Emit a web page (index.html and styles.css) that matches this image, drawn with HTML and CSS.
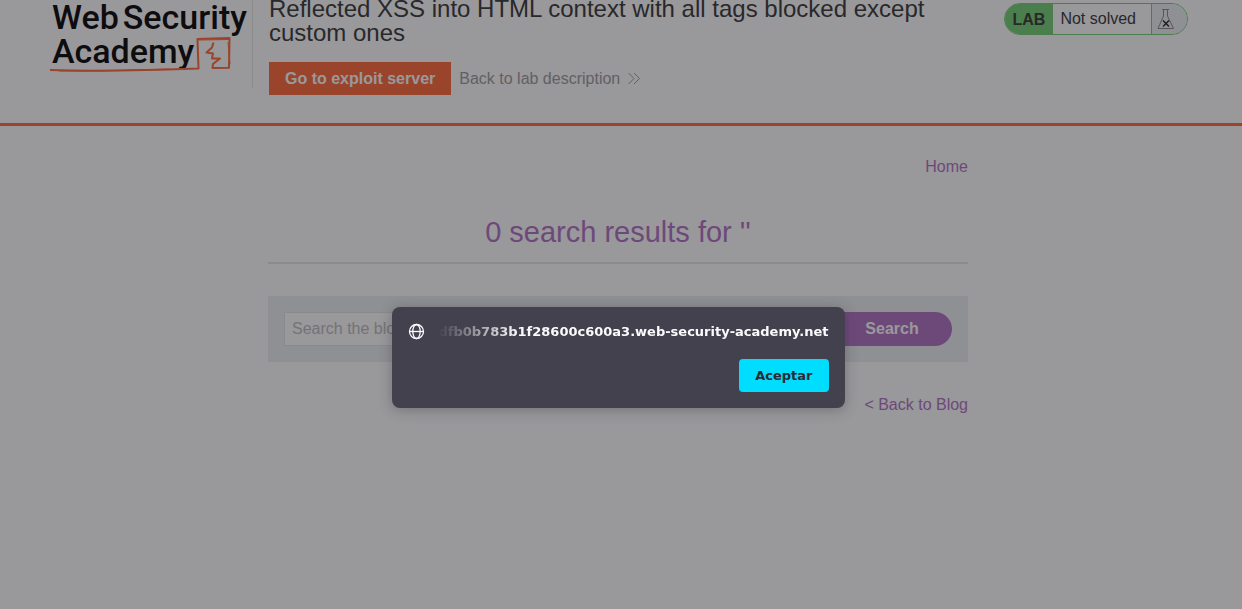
FILE: index.html
```html
<!DOCTYPE html>
<html lang="en">
<head>
<meta charset="utf-8">
<title>Reflected XSS into HTML context with all tags blocked except custom ones</title>
<link rel="stylesheet" href="styles.css">
</head>
<body>
<header class="lab-header">
  <div class="lab-header-inner">
    <a class="logo" href="#" aria-label="Web Security Academy">
      <span class="logo-line"><span>Web</span><span>Security</span></span>
      <span class="logo-line">Academy</span>
      <svg class="logo-mark" width="184" height="38" viewBox="0 0 184 38" fill="none" stroke="#ff6633" aria-hidden="true">
        <path d="M1 34Q30 35 70 34.500T149.500 32.500L148.500 3L180.500 2L180 31.700L163.500 32L164 28L171 22.500H163L164 17.500L157.500 16.500L163 11.500L164.500 6.500" stroke-width="2" stroke-linejoin="round"/>
        <path d="M10 35Q60 35 120 33M150 4L180 3.500M179 6L181 28" stroke-width="1"/>
      </svg>
    </a>
    <div class="lab-title">
      <h1>Reflected XSS into HTML context with all tags blocked except custom ones</h1>
      <div class="lab-actions">
        <a class="exploit" href="#">Go to exploit server</a>
        <a class="back-lab" href="#">Back to lab description
          <svg width="12" height="12" viewBox="0 0 12 12" fill="none" stroke="currentColor" aria-hidden="true"><path d="M.5 0L6 5.500L.5 11M6 0L11.500 5.500L6 11"/></svg>
        </a>
      </div>
    </div>
    <div class="lab-status">
      <span class="status-tag">LAB</span>
      <span class="status-text">Not solved</span>
      <span class="status-icon">
        <svg width="18" height="20" viewBox="0 0 18 20" fill="none" stroke="#88888c" aria-hidden="true">
          <path d="M5 .5H12M6.500 .5V7L1 19.500H16.500L10.500 7V.5"/>
          <path d="M6 11.500L12 17.500M12 11.500L6 17.500" stroke="#222" stroke-width="1.500"/>
        </svg>
      </span>
    </div>
  </div>
</header>
<main class="content">
  <nav class="top-links"><a href="#">Home</a></nav>
  <h2 class="results-title">0 search results for ''</h2>
  <form class="search">
    <input type="text" placeholder="Search the blog..." aria-label="Search the blog">
    <button type="button">Search</button>
  </form>
  <div class="back-blog"><a href="#">&lt; Back to Blog</a></div>
</main>
<div class="backdrop">
  <div class="alert" role="alertdialog" aria-labelledby="alert-host">
    <div class="alert-head">
      <svg width="17" height="17" viewBox="0 0 17 17" fill="none" stroke="#fbfbfe" stroke-width="1.300" aria-hidden="true">
        <circle cx="8.500" cy="8.500" r="7"/><ellipse cx="8.500" cy="8.500" rx="3.700" ry="7"/><path d="M1.500 8.500H15.500"/>
      </svg>
      <span class="host" id="alert-host">dfb0b783b1f28600c600a3.web-security-academy.net</span>
    </div>
    <button class="accept" type="button">Aceptar</button>
  </div>
</div>
</body>
</html>
```
FILE: styles.css
```css
* { box-sizing: border-box; }
body {
  margin: 0;
  overflow: hidden;
  background: #fff;
  color: #333332;
  font: 16px/20px "Liberation Sans", Arial, sans-serif;
}
a { text-decoration: none; color: #b070c4; }

.lab-header { border-bottom: 3px solid #ff6633; }
.lab-header-inner {
  display: flex;
  align-items: flex-start;
  padding: 0 54px 28px 52px;
}
.logo {
  position: relative;
  flex: none;
  width: 201px;
  height: 88px;
  border-right: 1px solid #e6e6e6;
  color: #000;
  font: 500 34px/34px Roboto, sans-serif;
  white-space: nowrap;
}
.logo-line { display: flex; gap: 4px; }
.logo-mark { position: absolute; left: -3px; top: 36px; }

.lab-title { flex: 1; margin-top: -3px; padding-left: 16px; }
.lab-title h1 {
  max-width: 680px;
  margin: 0 0 17px;
  font-size: 24px;
  line-height: 24px;
  font-weight: 400;
}
.lab-actions { display: flex; align-items: center; gap: 8px; }
.exploit {
  padding: 0 16px;
  background: #ff6633;
  color: #fff;
  font-weight: 700;
  line-height: 33px;
}
.back-lab { display: flex; align-items: center; gap: 8px; color: #9a9a9a; }

.lab-status {
  display: flex;
  flex: none;
  height: 32px;
  margin-top: 3px;
  overflow: hidden;
  border: 1px solid #6fcf70;
  border-radius: 16px;
  line-height: 30px;
}
.status-tag {
  padding: 1px 8px 0;
  background: #6fcf70;
  font-weight: 700;
}
.status-text { padding: 0 15px 0 7px; }
.status-icon {
  display: flex;
  align-items: center;
  padding: 0 12px 0 5px;
  border-left: 1px solid #6fcf70;
  background: #ecf0f1;
}

.content {
  width: 700px;
  max-width: 100%;
  margin: 0 auto;
  padding-top: 31px;
}
.content, .alert { position: relative; right: 3px; }
.top-links, .back-blog { text-align: right; }
.results-title {
  margin: 36px 0 32px;
  padding-bottom: 11px;
  border-bottom: 2px solid #e6e6e6;
  color: #b070c4;
  font-size: 29px;
  line-height: 38px;
  font-weight: 400;
  text-align: center;
}
.search {
  display: flex;
  margin-bottom: 33px;
  padding: 16px;
  background: #ecf0f1;
}
.search input {
  flex: 1;
  height: 34px;
  padding: 0 7px;
  border: 1px solid #e4e4e4;
  background: #fff;
  font: inherit;
}
.search input::placeholder { color: #bbb; opacity: 1; }
.search button {
  width: 120px;
  height: 34px;
  padding: 0;
  border: 0;
  border-radius: 0 17px 17px 0;
  background: #b070c4;
  color: #fff;
  font: inherit;
  font-weight: 700;
}

.backdrop {
  position: fixed;
  inset: 0;
  display: flex;
  align-items: flex-start;
  justify-content: center;
  padding-top: 307px;
  background: rgba(28, 27, 34, .45);
}
.alert {
  display: flex;
  flex-direction: column;
  gap: 19px;
  min-width: 453px;
  padding: 16px;
  border-radius: 8px;
  background: #42414d;
  box-shadow: 0 2px 14px rgba(28, 27, 34, .3);
  font: 700 13px/17px "DejaVu Sans", sans-serif;
}
.alert-head {
  display: flex;
  align-items: center;
  justify-content: space-between;
}
.host {
  color: #fbfbfe;
  -webkit-mask-image: linear-gradient(to right, transparent, #000 80px);
  mask-image: linear-gradient(to right, transparent, #000 80px);
}
.accept {
  align-self: flex-end;
  height: 33px;
  padding: 0 16px;
  border: 0;
  border-radius: 4px;
  background: #00ddff;
  color: #2b2a33;
  font: inherit;
}
```
